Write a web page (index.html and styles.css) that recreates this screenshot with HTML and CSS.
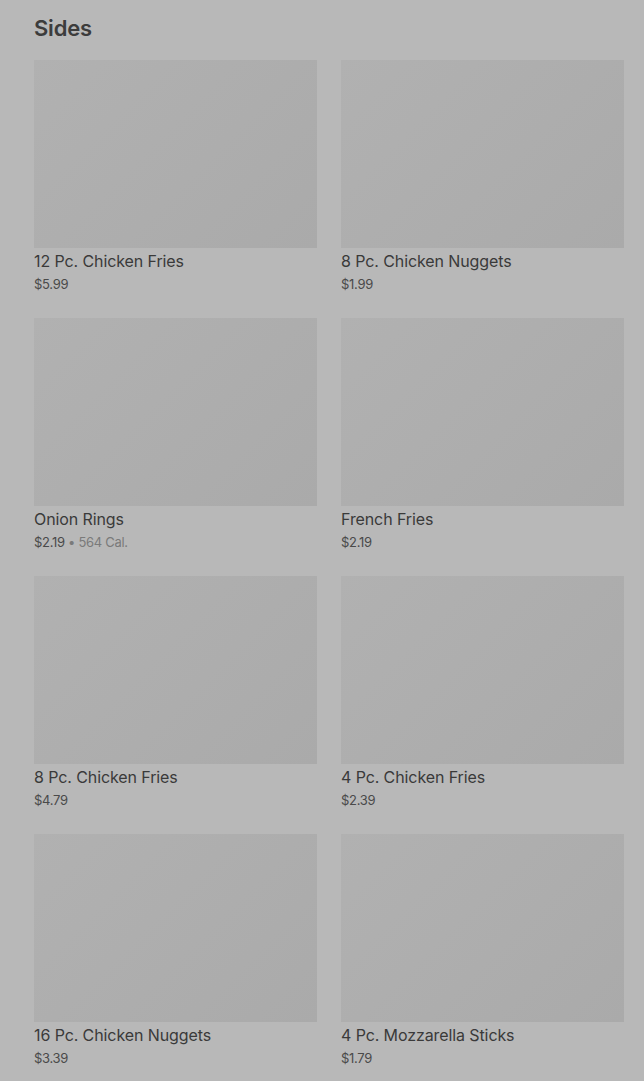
FILE: index.html
```html
<!DOCTYPE html>
<html lang="en">
<head>
    <meta charset="UTF-8">
    <meta name="viewport" content="width=device-width, initial-scale=1.0">
    <title>Sides</title>
    <link rel="stylesheet" href="styles.css">
</head>
<body>
    <section class="menu-section">
        <h2 class="section-title">Sides</h2>
        <div class="item-grid">
            <div class="item">
                <div class="item-img"></div>
                <div class="item-name">12 Pc. Chicken Fries</div>
                <div class="item-meta">$5.99</div>
            </div>
            <div class="item">
                <div class="item-img"></div>
                <div class="item-name">8 Pc. Chicken Nuggets</div>
                <div class="item-meta">$1.99</div>
            </div>
            <div class="item">
                <div class="item-img"></div>
                <div class="item-name">Onion Rings</div>
                <div class="item-meta">$2.19 <span class="cal">• 564 Cal.</span></div>
            </div>
            <div class="item">
                <div class="item-img"></div>
                <div class="item-name">French Fries</div>
                <div class="item-meta">$2.19</div>
            </div>
            <div class="item">
                <div class="item-img"></div>
                <div class="item-name">8 Pc. Chicken Fries</div>
                <div class="item-meta">$4.79</div>
            </div>
            <div class="item">
                <div class="item-img"></div>
                <div class="item-name">4 Pc. Chicken Fries</div>
                <div class="item-meta">$2.39</div>
            </div>
            <div class="item">
                <div class="item-img"></div>
                <div class="item-name">16 Pc. Chicken Nuggets</div>
                <div class="item-meta">$3.39</div>
            </div>
            <div class="item">
                <div class="item-img"></div>
                <div class="item-name">4 Pc. Mozzarella Sticks</div>
                <div class="item-meta">$1.79</div>
            </div>
        </div>
    </section>
</body>
</html>
```

FILE: styles.css
```css
body {
    margin: 0;
    font-family: Inter, "Noto Sans", sans-serif;
    background-color: #b8b8b8;
    color: #3a3a3a;
}
.menu-section {
    padding: 12px 20px 0 34px;
}
.section-title {
    margin: 0 0 16px;
    font-size: 22px;
    font-weight: 600;
    letter-spacing: -0.2px;
    line-height: 32px;
    color: #3c3c3c;
}
.item-grid {
    display: grid;
    grid-template-columns: 1fr 1fr;
    column-gap: 24px;
    row-gap: 10px;
}
.item {
    height: 248px;
}
.item-img {
    height: 188px;
    background: linear-gradient(135deg, #b1b1b1, #aaaaaa);
}
.item-name {
    margin-top: 3px;
    font-size: 16px;
    line-height: 20px;
    letter-spacing: -0.1px;
    color: #3a3a3a;
}
.item-meta {
    margin-top: 4px;
    font-size: 13px;
    line-height: 18px;
    color: #4a4a4a;
    letter-spacing: -0.3px;
}
.cal {
    color: #7a7a7a;
}
```
